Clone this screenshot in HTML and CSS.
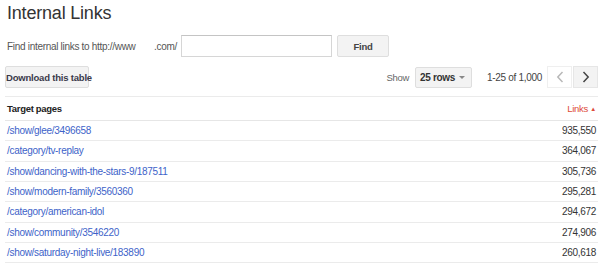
FILE: index.html
```html
<!DOCTYPE html>
<html>
<head>
<meta charset="utf-8">
<link rel="stylesheet" href="styles.css">
</head>
<body>
<div class="page">
  <h1 class="title">Internal Links</h1>
  <div class="find-row">
    <span class="find-label">Find internal links to http://www</span>
    <span class="find-domain">.com/</span>
    <input class="find-input" type="text">
    <button class="btn find-btn">Find</button>
  </div>
  <div class="toolbar">
    <button class="btn dl-btn">Download this table</button>
    <div class="spacer"></div>
    <span class="show-label">Show</span>
    <div class="select"><span>25 rows</span><span class="caret"></span></div>
    <span class="range">1-25 of 1,000</span>
    <div class="pager">
      <button class="pbtn prev"><svg width="8" height="12" viewBox="0 0 8 12"><path d="M6.5 1 L1.8 6 L6.5 11" fill="none" stroke="#b8b8b8" stroke-width="1.5"/></svg></button>
      <button class="pbtn next"><svg width="8" height="12" viewBox="0 0 8 12"><path d="M1.5 1 L6.2 6 L1.5 11" fill="none" stroke="#444" stroke-width="1.5"/></svg></button>
    </div>
  </div>
  <table class="tbl">
    <thead>
      <tr><th class="c1">Target pages</th><th class="c2">Links <span class="tri">&#9650;</span></th></tr>
    </thead>
    <tbody>
      <tr><td><a href="#">/show/glee/3496658</a></td><td class="num">935,550</td></tr>
      <tr><td><a href="#">/category/tv-replay</a></td><td class="num">364,067</td></tr>
      <tr><td><a href="#">/show/dancing-with-the-stars-9/187511</a></td><td class="num">305,736</td></tr>
      <tr><td><a href="#">/show/modern-family/3560360</a></td><td class="num">295,281</td></tr>
      <tr><td><a href="#">/category/american-idol</a></td><td class="num">294,672</td></tr>
      <tr><td><a href="#">/show/community/3546220</a></td><td class="num">274,906</td></tr>
      <tr><td><a href="#">/show/saturday-night-live/183890</a></td><td class="num">260,618</td></tr>
    </tbody>
  </table>
</div>
</body>
</html>
```
FILE: styles.css
```css
* { box-sizing: border-box; }
html, body { margin: 0; padding: 0; background: #fff; }
body {
  font-family: "Liberation Sans", Arial, sans-serif;
  color: #444;
  font-size: 10px;
  letter-spacing: -0.3px;
}
.page { padding: 0 2px 0 5px; }
.title {
  margin: 0;
  padding: 3px 0 0 2px;
  height: 30px;
  font-size: 18px;
  font-weight: normal;
  letter-spacing: -0.2px;
  color: #333;
}
.find-row {
  display: flex;
  align-items: center;
  height: 32px;
  padding-left: 2px;
  color: #555;
  white-space: nowrap;
}
.find-label { width: 126px; }
.find-domain { margin-left: 21px; width: 24px; }
.find-input {
  margin: 0 0 0 3px;
  width: 151px;
  height: 22px;
  border: 1px solid #d6d6d6;
  border-top-color: #c4c4c4;
  padding: 0;
}
.btn {
  font-family: "Liberation Sans", Arial, sans-serif;
  font-size: 9.5px;
  letter-spacing: -0.2px;
  font-weight: bold;
  color: #444;
  background: #f3f3f3;
  border: 1px solid #dedede;
  border-radius: 2px;
  padding: 0;
  height: 22px;
  white-space: nowrap;
}
.find-btn { margin-left: 5px; width: 52px; }
.toolbar {
  display: flex;
  align-items: center;
  height: 34px;
  padding-bottom: 4px;
  white-space: nowrap;
}
.dl-btn { width: 84px; height: 22px; color: #3a3a4a; }
.spacer { flex: 1; }
.show-label { font-size: 9.5px; color: #666; margin-right: 6px; }
.select {
  display: flex;
  align-items: center;
  justify-content: space-between;
  width: 57px;
  height: 21px;
  background: #f3f3f3;
  border: 1px solid #dedede;
  border-radius: 2px;
  padding: 0 6px 0 4px;
  font-weight: bold;
  color: #333;
}
.caret {
  width: 0; height: 0;
  border-left: 3px solid transparent;
  border-right: 3px solid transparent;
  border-top: 3px solid #888;
}
.range { color: #444; margin-left: 15px; margin-right: 5px; }
.pager { display: flex; }
.pbtn {
  width: 25px;
  height: 22px;
  border: 1px solid #efefef;
  background: #fff;
  display: flex;
  align-items: center;
  justify-content: center;
  padding: 0;
}
.pbtn.next { background: #f3f3f3; border-color: #e6e6e6; margin-left: 1px; }
.tbl {
  width: 100%;
  border-collapse: collapse;
  border-top: 1px solid #ebebeb;
}
.tbl th {
  height: 24px;
  font-size: 9.5px;
  font-weight: bold;
  color: #222;
  text-align: left;
  padding: 0 0 0 2px;
  border-bottom: 1px solid #e6e6e6;
}
.tbl th.c2 { text-align: right; color: #dd4b39; padding-right: 2px; font-weight: normal; }
.tri { font-size: 6px; position: relative; top: -1px; }
.tbl td {
  height: 20.33px;
  padding: 0 0 0 2px;
  border-bottom: 1px solid #ebebeb;
}
.tbl td a { color: #3d63c9; text-decoration: none; }
.tbl td.num { text-align: right; color: #333; padding-right: 2px; }
```
